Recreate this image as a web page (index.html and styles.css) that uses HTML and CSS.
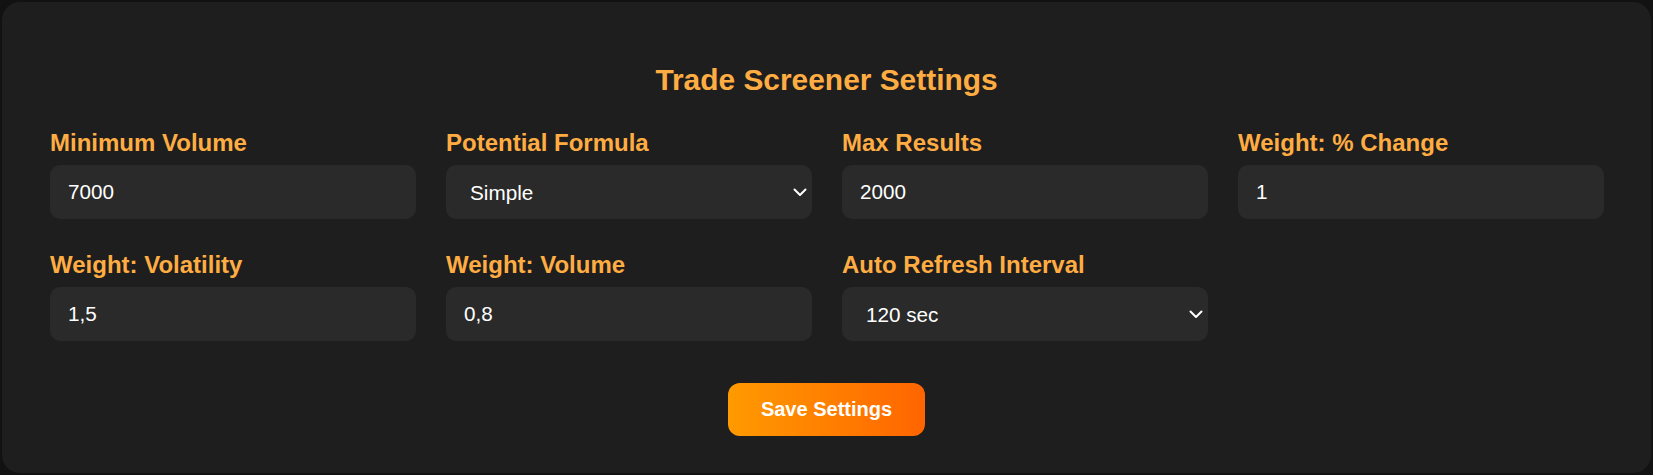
FILE: index.html
```html
<!DOCTYPE html>
<html lang="en">
<head>
<meta charset="utf-8">
<title>Trade Screener Settings</title>
<link rel="stylesheet" href="styles.css">
</head>
<body>
<div class="card">
  <h2 class="title">Trade Screener Settings</h2>
  <div class="grid">
    <div class="field">
      <label class="label">Minimum Volume</label>
      <input class="control" type="text" value="7000">
    </div>
    <div class="field">
      <label class="label">Potential Formula</label>
      <div class="select-wrap">
        <select class="control select"><option>Simple</option></select>
        <svg class="chevron" width="14" height="9" viewBox="0 0 14 9"><polyline points="1.5,1.5 7,7 12.5,1.5" fill="none" stroke="#ffffff" stroke-width="2" stroke-linecap="round" stroke-linejoin="round"/></svg>
      </div>
    </div>
    <div class="field">
      <label class="label">Max Results</label>
      <input class="control" type="text" value="2000">
    </div>
    <div class="field">
      <label class="label">Weight: % Change</label>
      <input class="control" type="text" value="1">
    </div>
    <div class="field">
      <label class="label">Weight: Volatility</label>
      <input class="control" type="text" value="1,5">
    </div>
    <div class="field">
      <label class="label">Weight: Volume</label>
      <input class="control" type="text" value="0,8">
    </div>
    <div class="field">
      <label class="label">Auto Refresh Interval</label>
      <div class="select-wrap">
        <select class="control select"><option>120 sec</option></select>
        <svg class="chevron" width="14" height="9" viewBox="0 0 14 9"><polyline points="1.5,1.5 7,7 12.5,1.5" fill="none" stroke="#ffffff" stroke-width="2" stroke-linecap="round" stroke-linejoin="round"/></svg>
      </div>
    </div>
  </div>
  <div class="actions">
    <button class="save">Save Settings</button>
  </div>
</div>
</body>
</html>
```
FILE: styles.css
```css
* { box-sizing: border-box; }
html, body { height: 100%; }
body {
  margin: 0;
  padding: 2px;
  background: #121212;
  font-family: "Liberation Sans", Arial, sans-serif;
}
.card {
  background: #1e1e1e;
  border-radius: 18px;
  padding: 61px 48px 37px 48px;
  height: 471px;
  width: 1649px;
}
.title {
  margin: 0 0 32px 0;
  text-align: center;
  color: #ffad42;
  font-size: 29.9px;
  font-weight: bold;
  line-height: 34px;
}
.grid {
  display: grid;
  grid-template-columns: repeat(4, 366px);
  column-gap: 30px;
  row-gap: 32px;
}
.field {
  display: flex;
  flex-direction: column;
}
.label {
  display: block;
  color: #ffad42;
  font-size: 24px;
  font-weight: bold;
  line-height: 27px;
  margin-bottom: 9px;
}
.control {
  height: 54px;
  width: 100%;
  background: #2a2a2a;
  border: none;
  border-radius: 10px;
  color: #ffffff;
  font-family: "Liberation Sans", Arial, sans-serif;
  font-size: 20.7px;
  padding: 0 18px;
  outline: none;
}
.select-wrap {
  position: relative;
}
.select {
  appearance: none;
  -webkit-appearance: none;
  padding: 0 24px;
}
.chevron {
  position: absolute;
  right: 5px;
  top: 23px;
  pointer-events: none;
}
.actions {
  display: flex;
  justify-content: center;
  margin-top: 42px;
}
.save {
  height: 53px;
  padding: 0 33px;
  border: none;
  border-radius: 12px;
  background: linear-gradient(90deg, #ff9a00, #ff6500);
  color: #ffffff;
  font-family: "Liberation Sans", Arial, sans-serif;
  font-size: 20px;
  font-weight: bold;
  cursor: pointer;
}
```
